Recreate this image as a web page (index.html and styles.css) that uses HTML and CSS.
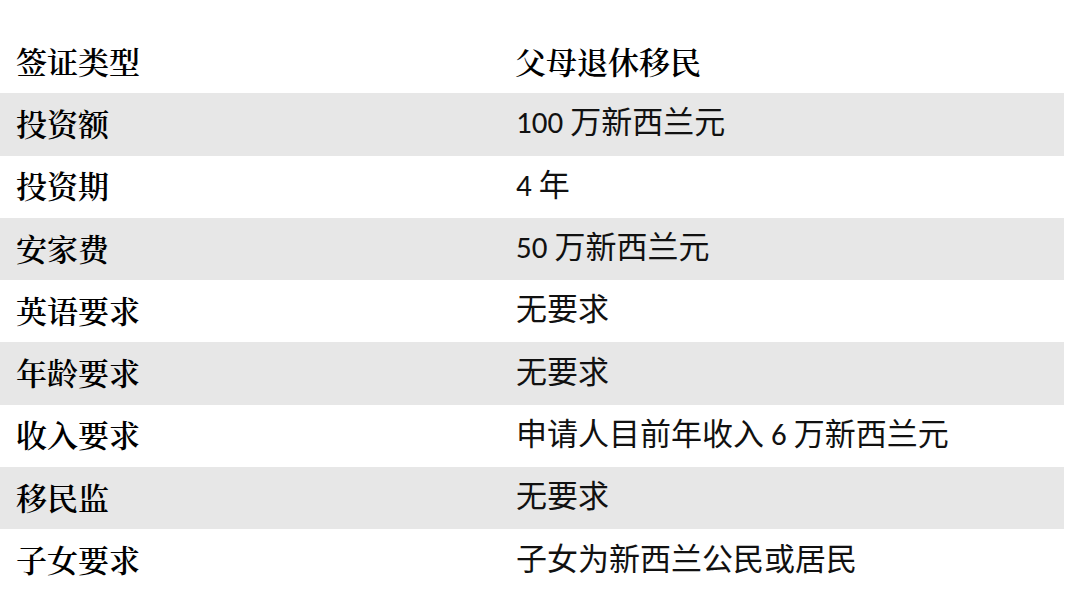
FILE: index.html
```html
<!DOCTYPE html>
<html lang="zh-CN">
<head>
<meta charset="utf-8">
<title>父母退休移民</title>
<link rel="stylesheet" href="styles.css">
</head>
<body>
<div class="table">
  <div class="row">
    <div class="key">签证类型</div>
    <div class="val head">父母退休移民</div>
  </div>
  <div class="row shade">
    <div class="key">投资额</div>
    <div class="val">100 万新西兰元</div>
  </div>
  <div class="row">
    <div class="key">投资期</div>
    <div class="val">4 年</div>
  </div>
  <div class="row shade">
    <div class="key">安家费</div>
    <div class="val">50 万新西兰元</div>
  </div>
  <div class="row">
    <div class="key">英语要求</div>
    <div class="val">无要求</div>
  </div>
  <div class="row shade">
    <div class="key">年龄要求</div>
    <div class="val">无要求</div>
  </div>
  <div class="row">
    <div class="key">收入要求</div>
    <div class="val">申请人目前年收入 6 万新西兰元</div>
  </div>
  <div class="row shade">
    <div class="key">移民监</div>
    <div class="val">无要求</div>
  </div>
  <div class="row">
    <div class="key">子女要求</div>
    <div class="val">子女为新西兰公民或居民</div>
  </div>
</div>
</body>
</html>
```
FILE: styles.css
```css
html, body {
  margin: 0;
  padding: 0;
  background: #ffffff;
}
body {
  box-sizing: border-box;
  padding-top: 31px;
  width: 1068px;
  height: 607px;
  overflow: hidden;
}
.table {
  width: 1064px;
  display: flex;
  flex-direction: column;
}
.row {
  height: 62.3px;
  display: grid;
  grid-template-columns: 499px 1fr;
  align-items: center;
  color: #000;
}
.shade {
  background-color: #e7e7e7;
}
.key {
  padding-left: 16px;
  padding-bottom: 4px;
  font-family: "Noto Serif CJK SC", "Noto Sans CJK SC", serif;
  font-weight: 600;
  font-size: 31px;
  line-height: 1;
}
.val {
  padding-left: 17px;
  padding-bottom: 3px;
  font-family: "Carlito", "Lato", "Noto Sans CJK SC", sans-serif;
  font-size: 31px;
  line-height: 1;
  color: #111;
}
.val.head {
  font-family: "Noto Serif CJK SC", "Noto Sans CJK SC", serif;
  font-weight: 600;
  padding-left: 16px;
  padding-bottom: 4px;
  color: #000;
}
```
